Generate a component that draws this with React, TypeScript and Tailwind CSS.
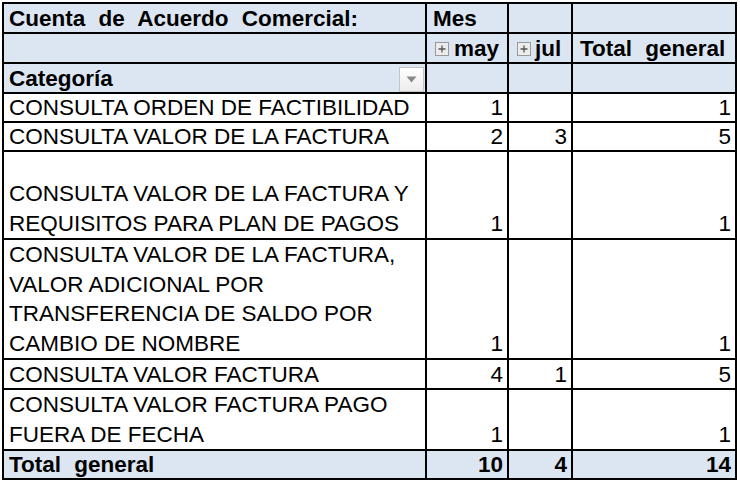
import React from "react";

type Row = {
  lines: string[];
  may: string;
  jul: string;
  total: string;
  h: string;
};

const rows: Row[] = [
  { lines: ["CONSULTA ORDEN DE FACTIBILIDAD"], may: "1", jul: "", total: "1", h: "h-[29px]" },
  { lines: ["CONSULTA VALOR DE LA FACTURA"], may: "2", jul: "3", total: "5", h: "h-[29px]" },
  {
    lines: ["CONSULTA VALOR DE LA FACTURA Y", "REQUISITOS PARA PLAN DE PAGOS"],
    may: "1",
    jul: "",
    total: "1",
    h: "h-[88px]",
  },
  {
    lines: [
      "CONSULTA VALOR DE LA FACTURA,",
      "VALOR ADICIONAL POR",
      "TRANSFERENCIA DE SALDO POR",
      "CAMBIO DE NOMBRE",
    ],
    may: "1",
    jul: "",
    total: "1",
    h: "h-[120px]",
  },
  { lines: ["CONSULTA VALOR FACTURA"], may: "4", jul: "1", total: "5", h: "h-[30px]" },
  {
    lines: ["CONSULTA VALOR FACTURA PAGO", "FUERA DE FECHA"],
    may: "1",
    jul: "",
    total: "1",
    h: "h-[59px]",
  },
];

function PlusBox() {
  return (
    <span className="inline-flex h-[14px] w-[14px] items-center justify-center border border-[#9a9a9a] bg-[#ececec]">
      <svg width="10" height="10" viewBox="0 0 10 10">
        <path d="M5 1.5v7M1.5 5h7" stroke="#555" strokeWidth="1.3" />
      </svg>
    </span>
  );
}

function DropButton() {
  return (
    <span className="flex h-[25px] w-[25px] items-center justify-center border border-[#c4c4c4] bg-gradient-to-b from-white to-[#ececec]">
      <svg width="11" height="7" viewBox="0 0 11 7">
        <path d="M0.5 0.5h10L5.5 6.5z" fill="#8a8a8a" />
      </svg>
    </span>
  );
}

const cell = "border-2 border-black p-0 align-bottom";
const one = "leading-[26px]";
const multi = "leading-[29.5px]";
const head = "bg-[#dce6f2] font-bold [word-spacing:7px]";

export default function App() {
  return (
    <div
      className="bg-white pl-[2px] pt-[2px] text-[22.5px] text-black"
      style={{ fontFamily: '"Liberation Sans", Arial, sans-serif' }}
    >
      <table className="w-[733px] table-fixed border-collapse">
        <colgroup>
          <col className="w-[423px]" />
          <col className="w-[82px]" />
          <col className="w-[64px]" />
          <col className="w-[164px]" />
        </colgroup>
        <tbody>
          <tr>
            <td className={`${cell} ${one} ${head} h-[30px] pl-[5px]`}>Cuenta de Acuerdo Comercial:</td>
            <td className={`${cell} ${one} ${head} pl-[6px]`}>Mes</td>
            <td className={`${cell} ${one} ${head}`} />
            <td className={`${cell} ${one} ${head}`} />
          </tr>
          <tr>
            <td className={`${cell} ${one} ${head} h-[29px]`} />
            <td className={`${cell} ${one} ${head} pl-[8px]`}>
              <span className="inline-flex items-center gap-[5px]">
                <PlusBox />
                may
              </span>
            </td>
            <td className={`${cell} ${one} ${head} pl-[8px]`}>
              <span className="inline-flex items-center gap-[4px]">
                <PlusBox />
                jul
              </span>
            </td>
            <td className={`${cell} ${one} ${head} pl-[7px]`}>Total general</td>
          </tr>
          <tr>
            <td className={`${cell} ${one} ${head} h-[30px] pl-[5px]`}>
              <div className="flex items-center justify-between pr-[1px]">
                <span>Categoría</span>
                <DropButton />
              </div>
            </td>
            <td className={`${cell} ${one} ${head}`} />
            <td className={`${cell} ${one} ${head}`} />
            <td className={`${cell} ${one} ${head}`} />
          </tr>
          {rows.map((r, i) => {
            const lh = r.lines.length > 1 ? multi : one;
            return (
              <tr key={i}>
                <td className={`${cell} ${lh} ${r.h} pl-[5px]`}>
                  {r.lines.map((l) => (
                    <div key={l}>{l}</div>
                  ))}
                </td>
                <td className={`${cell} ${lh} pr-[4px] text-right`}>{r.may}</td>
                <td className={`${cell} ${lh} pr-[4px] text-right`}>{r.jul}</td>
                <td className={`${cell} ${lh} pr-[4px] text-right`}>{r.total}</td>
              </tr>
            );
          })}
          <tr>
            <td className={`${cell} ${one} ${head} h-[29px] pl-[5px]`}>Total general</td>
            <td className={`${cell} ${one} ${head} pr-[4px] text-right`}>10</td>
            <td className={`${cell} ${one} ${head} pr-[4px] text-right`}>4</td>
            <td className={`${cell} ${one} ${head} pr-[4px] text-right`}>14</td>
          </tr>
        </tbody>
      </table>
    </div>
  );
}
